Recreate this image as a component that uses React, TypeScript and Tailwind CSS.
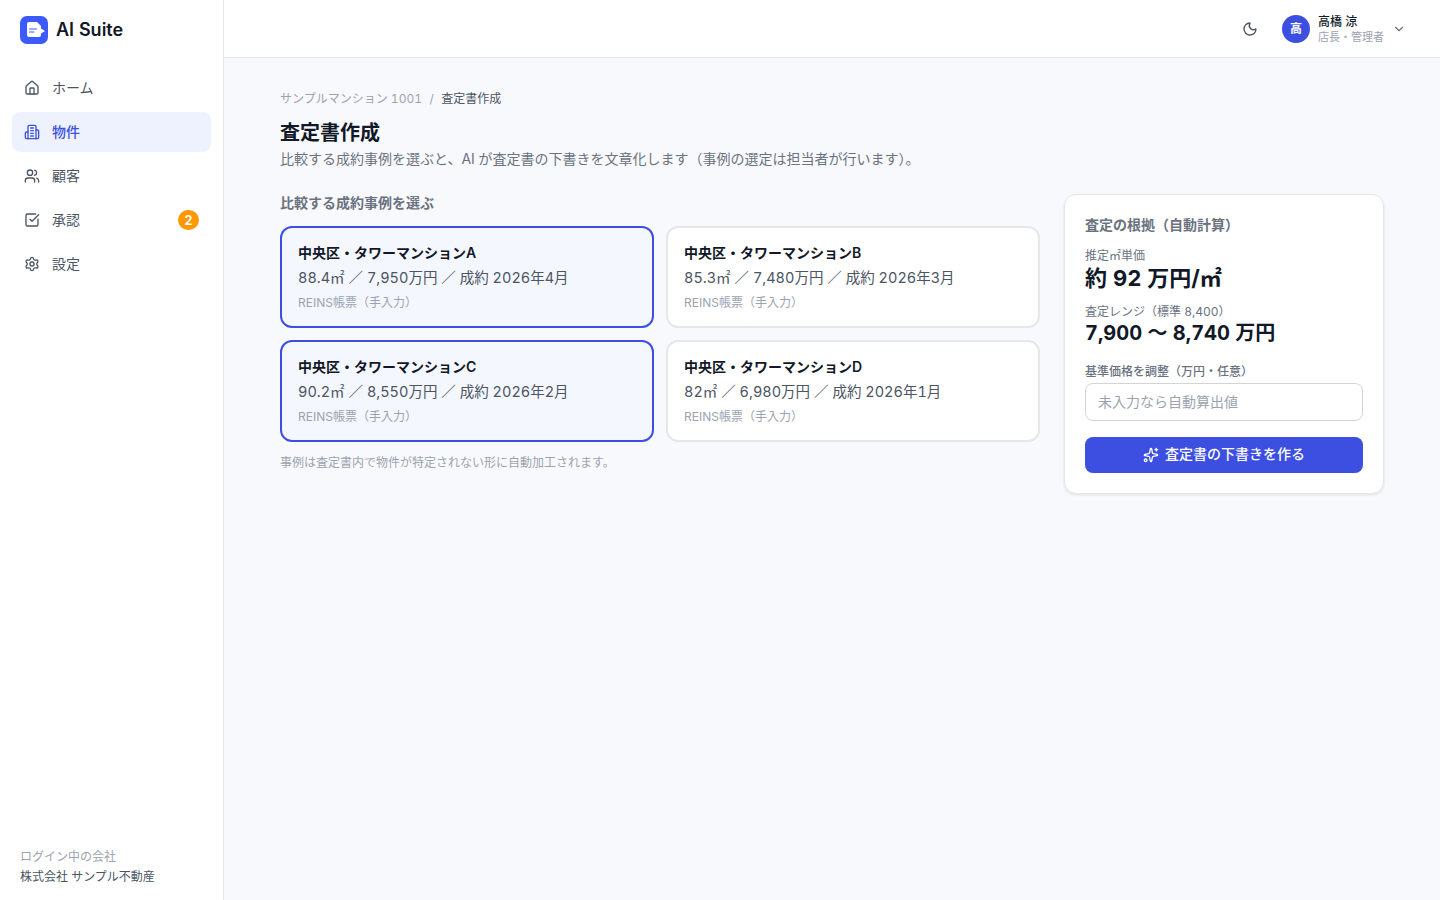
import { CheckSquare, ChevronDown, Home, Moon, Settings, Sparkles, Users } from 'lucide-react';
import type { ReactNode } from 'react';

const BuildingIcon = ({ className }: { className?: string }) => (
  <svg
    className={className}
    viewBox="0 0 24 24"
    fill="none"
    stroke="currentColor"
    strokeWidth="2"
    strokeLinecap="round"
    strokeLinejoin="round"
  >
    <path d="M6 22V4a2 2 0 0 1 2-2h8a2 2 0 0 1 2 2v18Z" />
    <path d="M6 12H4a2 2 0 0 0-2 2v6a2 2 0 0 0 2 2h2" />
    <path d="M18 9h2a2 2 0 0 1 2 2v9a2 2 0 0 1-2 2h-2" />
    <path d="M10 6h4" />
    <path d="M10 10h4" />
    <path d="M10 14h4" />
    <path d="M10 18h4" />
  </svg>
);

const Logo = () => (
  <svg className="h-7 w-7" viewBox="0 0 28 28">
    <rect width="28" height="28" rx="7" fill="#3d5afe" />
    <path
      d="M7 8a2 2 0 0 1 2-2h8l4 4v2.5l4 2.5-4 2.5V19a2 2 0 0 1-2 2H9a2 2 0 0 1-2-2Z"
      fill="#fff"
    />
    <path d="M9.5 13h7M9.5 16h4.5" stroke="#3d5afe" strokeWidth="1.1" strokeLinecap="round" />
  </svg>
);

const navItems: { label: string; icon: ReactNode; active?: boolean; badge?: number }[] = [
  { label: 'ホーム', icon: <Home className="h-4 w-4" /> },
  { label: '物件', icon: <BuildingIcon className="h-4 w-4" />, active: true },
  { label: '顧客', icon: <Users className="h-4 w-4" /> },
  { label: '承認', icon: <CheckSquare className="h-4 w-4" />, badge: 2 },
  { label: '設定', icon: <Settings className="h-4 w-4" /> },
];

const cases = [
  { name: '中央区・タワーマンションA', detail: '88.4㎡ ／ 7,950万円 ／ 成約 2026年4月', selected: true },
  { name: '中央区・タワーマンションB', detail: '85.3㎡ ／ 7,480万円 ／ 成約 2026年3月', selected: false },
  { name: '中央区・タワーマンションC', detail: '90.2㎡ ／ 8,550万円 ／ 成約 2026年2月', selected: true },
  { name: '中央区・タワーマンションD', detail: '82㎡ ／ 6,980万円 ／ 成約 2026年1月', selected: false },
];

const Sidebar = () => (
  <aside className="flex w-[224px] shrink-0 flex-col border-r border-[#e5e7eb] bg-white">
    <div className="flex h-[60px] items-center gap-2 px-5">
      <Logo />
      <span className="text-lg font-semibold leading-7 text-[#111827]">AI Suite</span>
    </div>
    <nav className="mt-2 flex flex-col gap-1 px-3">
      {navItems.map((item) => (
        <a
          key={item.label}
          className={`flex h-10 items-center gap-3 rounded-lg px-3 text-sm ${
            item.active ? 'bg-[#eef2fe] font-medium text-[#3d4fe0]' : 'text-[#4b5563]'
          }`}
        >
          {item.icon}
          <span>{item.label}</span>
          {item.badge && (
            <span className="ml-auto flex h-5 w-[21px] items-center justify-center rounded-full bg-[#ff9800] text-[13px] font-semibold text-white">
              {item.badge}
            </span>
          )}
        </a>
      ))}
    </nav>
    <div className="mt-auto px-5 pb-[13px] text-xs">
      <p className="leading-5 text-[#9ca3af]">ログイン中の会社</p>
      <p className="leading-5 text-[#4b5563]">株式会社 サンプル不動産</p>
    </div>
  </aside>
);

const Header = () => (
  <header className="flex h-[58px] shrink-0 items-center justify-end border-b border-[#e5e7eb] bg-white pr-[34px]">
    <Moon className="h-4 w-4 text-[#4b5563]" />
    <div className="ml-6 flex h-7 w-7 items-center justify-center rounded-full bg-[#3d4fe0] text-xs font-semibold text-white">
      高
    </div>
    <div className="ml-2 flex flex-col">
      <span className="text-xs font-medium leading-4 text-[#111827]">高橋 涼</span>
      <span className="mt-px text-[11px] leading-[13px] text-[#9ca3af]">店長・管理者</span>
    </div>
    <ChevronDown className="ml-2 h-3.5 w-3.5 text-[#6b7280]" />
  </header>
);

const CaseCard = ({ name, detail, selected }: { name: string; detail: string; selected: boolean }) => (
  <div
    className={`flex h-[102px] flex-col justify-center rounded-xl border-2 px-4 pt-0.5 ${
      selected ? 'border-[#3d4fe0] bg-[#f5f7ff]' : 'border-[#e5e7eb] bg-white'
    }`}
  >
    <p className="text-sm font-semibold leading-6 text-[#111827]">{name}</p>
    <p className="mt-px text-[14.5px] leading-6 text-[#4b5563]">{detail}</p>
    <p className="mt-px text-xs leading-6 text-[#9ca3af]">REINS帳票（手入力）</p>
  </div>
);

const SummaryCard = () => (
  <div className="mt-px h-[300px] w-[320px] shrink-0 rounded-xl border border-[#e5e7eb] bg-white p-5 shadow-[0_1px_3px_rgba(0,0,0,0.1)]">
    <h2 className="text-sm font-semibold leading-5 text-[#6b7280]">査定の根拠（自動計算）</h2>
    <p className="mt-[13px] text-xs leading-4 text-[#6b7280]">推定㎡単価</p>
    <p className="text-[22px] font-bold leading-7 text-[#111827]">約 92 万円/㎡</p>
    <p className="mt-3 text-xs leading-4 text-[#6b7280]">査定レンジ（標準 8,400）</p>
    <p className="-mt-px text-xl font-bold leading-7 text-[#111827]">7,900 〜 8,740 万円</p>
    <label className="mt-[17px] block text-xs font-medium leading-4 text-[#6b7280]">基準価格を調整（万円・任意）</label>
    <input
      className="mt-[3px] h-[38px] w-full rounded-lg border border-[#d1d5db] bg-white px-3 pb-0.5 text-sm outline-none placeholder:text-[#9ca3af]"
      placeholder="未入力なら自動算出値"
    />
    <button className="mt-4 flex h-9 w-full items-center justify-center gap-1.5 rounded-lg bg-[#3d4fe0] pb-0.5 text-sm font-medium text-white">
      <Sparkles className="mt-0.5 h-4 w-4" />
      査定書の下書きを作る
    </button>
  </div>
);

export default function App() {
  return (
    <div className='flex h-screen bg-[#f8f9fc] tabular-nums [font-family:Inter,"Noto_Sans_CJK_JP",sans-serif]'>
      <Sidebar />
      <div className="flex min-w-0 flex-1 flex-col">
        <Header />
        <main className="flex-1 px-14 pt-[33px]">
          <div className="flex items-center gap-[7.5px] text-xs leading-4">
            <span className="text-[#9ca3af]">サンプルマンション 1001</span>
            <span className="text-[#9ca3af]">/</span>
            <span className="text-[#4b5563]">査定書作成</span>
          </div>
          <h1 className="mt-3 text-xl font-bold leading-7 text-[#111827]">査定書作成</h1>
          <p className="mt-0.5 text-sm leading-5 text-[#6b7280]">
            比較する成約事例を選ぶと、AI が査定書の下書きを文章化します（事例の選定は担当者が行います）。
          </p>
          <div className="mt-6 flex gap-6">
            <section className="min-w-0 flex-1">
              <h2 className="text-sm font-semibold leading-5 text-[#6b7280]">比較する成約事例を選ぶ</h2>
              <div className="mt-[13px] grid grid-cols-[374px_374px] gap-3">
                {cases.map((c) => (
                  <CaseCard key={c.name} {...c} />
                ))}
              </div>
              <p className="mt-[11px] text-xs leading-5 text-[#9ca3af]">事例は査定書内で物件が特定されない形に自動加工されます。</p>
            </section>
            <SummaryCard />
          </div>
        </main>
      </div>
    </div>
  );
}
